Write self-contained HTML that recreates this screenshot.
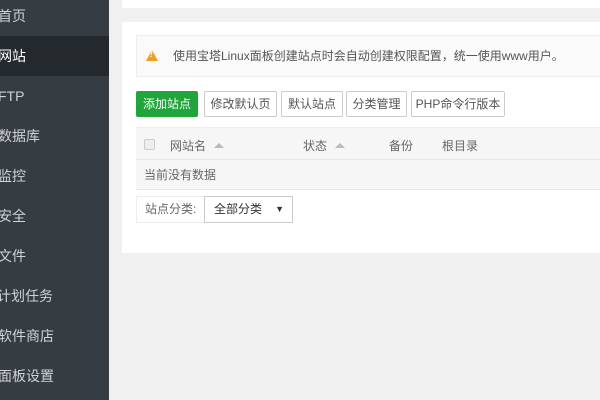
<!DOCTYPE html>
<html><head><meta charset="utf-8"><style>
*{margin:0;padding:0;box-sizing:border-box}
body{width:600px;height:400px;overflow:hidden;background:#f0f0f0;font-family:"Liberation Sans","Noto Sans CJK SC",sans-serif;position:relative}
.side{position:absolute;left:0;top:0;width:109px;height:400px;background:#353c42}
.side div{position:absolute;left:-2px;height:40px;line-height:40px;width:111px;color:#d0d3d5;font-size:14px;white-space:nowrap}
.side .act{background:#24292d;color:#fff}
.card{position:absolute;background:#fff;left:122px;width:478px}
.alert{position:absolute;left:136px;top:35px;width:470px;height:42px;background:#fafafa;border:1px solid #eee;font-size:12px;color:#555;line-height:40px;padding-left:36px}
.tri{position:absolute;left:9px;top:14px;width:0;height:0;border-left:6px solid transparent;border-right:6px solid transparent;border-bottom:11px solid #f0a020}
.tri:after{content:"!";position:absolute;left:-2px;top:-1px;font-size:8px;line-height:11px;color:#fff;font-weight:bold}
.btn{position:absolute;top:91px;height:26px;border:1px solid #ccc;border-radius:2px;font-size:12px;color:#555;text-align:center;line-height:24px;background:#fff}
.g{background:#20a53a;border-color:#20a53a;color:#fff}
.th{position:absolute;left:136px;top:127px;width:470px;height:33px;background:#f6f6f6;border-top:1px solid #eee;border-bottom:1px solid #e6e6e6;font-size:12px;color:#666}
.th span{position:absolute;top:9px}
.up{display:inline-block;width:0;height:0;border-left:5px solid transparent;border-right:5px solid transparent;border-bottom:5px solid #bbb;margin-left:8px;vertical-align:2px}
.row{position:absolute;left:136px;top:160px;width:470px;height:30px;background:#f6f6f6;border-bottom:1px solid #e6e6e6;font-size:12px;color:#666;line-height:30px;padding-left:8px}
</style></head><body>
<div class="side">
<div style="top:-4px">首页</div>
<div class="act" style="top:36px">网站</div>
<div style="top:76px">FTP</div>
<div style="top:116px">数据库</div>
<div style="top:156px">监控</div>
<div style="top:196px">安全</div>
<div style="top:236px">文件</div>
<div style="top:276px;left:-3px">计划任务</div>
<div style="top:316px">软件商店</div>
<div style="top:356px">面板设置</div>
</div>
<div class="card" style="top:0;height:8px"></div>
<div class="card" style="top:22px;height:231px"></div>
<div class="alert"><i class="tri"></i>使用宝塔Linux面板创建站点时会自动创建权限配置，统一使用www用户。</div>
<div class="btn g" style="left:136px;width:62px">添加站点</div>
<div class="btn" style="left:204px;width:73px">修改默认页</div>
<div class="btn" style="left:281px;width:62px">默认站点</div>
<div class="btn" style="left:346px;width:61px">分类管理</div>
<div class="btn" style="left:411px;width:94px">PHP命令行版本</div>
<div class="th">
<span style="left:8px;top:11px;width:11px;height:11px;border:1px solid #ccc;background:#eee;border-radius:2px"></span>
<span style="left:34px">网站名<i class="up"></i></span>
<span style="left:167px">状态<i class="up"></i></span>
<span style="left:253px">备份</span>
<span style="left:306px">根目录</span>
</div>
<div class="row">当前没有数据</div>
<div style="position:absolute;left:136px;top:196px;width:69px;height:27px;border:1px solid #eee;font-size:12px;color:#666;line-height:25px;padding-left:8px">站点分类:</div>
<div style="position:absolute;left:204px;top:196px;width:89px;height:27px;border:1px solid #ccc;font-size:12px;color:#333;line-height:25px;padding-left:9px">全部分类<span style="position:absolute;right:8px;font-size:9px">▼</span></div>
</body></html>
